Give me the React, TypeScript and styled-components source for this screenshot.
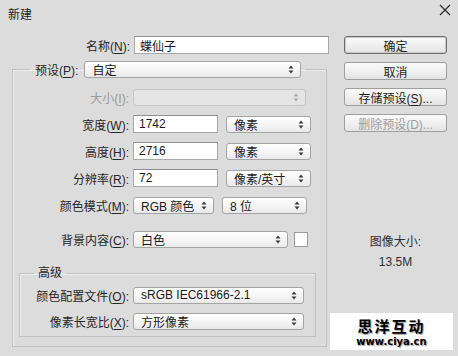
import React from 'react';
import styled, { createGlobalStyle, css } from 'styled-components';

const GlobalStyle = createGlobalStyle`
  html, body {
    margin: 0;
    padding: 0;
    background: #dcdcdc;
  }
  * {
    box-sizing: border-box;
  }
`;

const Window = styled.div`
  position: relative;
  width: 458px;
  height: 356px;
  overflow: hidden;
  background: #dcdcdc;
  color: #262626;
  font-family: 'Liberation Sans', 'Noto Sans CJK SC', sans-serif;
  font-size: 12px;
`;

const TitleBar = styled.div`
  height: 26px;
  display: flex;
  align-items: center;
  justify-content: space-between;
  padding: 0 6px 0 8px;
  font-size: 12px;
  color: #1e1e1e;
`;

const CloseButton = styled.button`
  width: 14px;
  height: 14px;
  margin-top: -6px;
  padding: 0;
  border: none;
  background: none;
  display: flex;
  align-items: center;
  justify-content: center;
`;

const Main = styled.div`
  display: flex;
  gap: 17px;
  padding: 10px 11px 0 12px;
`;

const LeftColumn = styled.div`
  width: 315px;
  display: flex;
  flex-direction: column;
`;

const Row = styled.div<{ $labelWidth: number; $top?: number }>`
  display: grid;
  grid-template-columns: ${(p) => p.$labelWidth}px auto;
  column-gap: 4px;
  align-items: center;
  height: 18px;
  margin-top: ${(p) => p.$top ?? 9}px;
`;

const Label = styled.label<{ $disabled?: boolean }>`
  text-align: right;
  white-space: nowrap;
  color: ${(p) => (p.$disabled ? '#9a9a9a' : '#262626')};

  u {
    text-underline-offset: 2px;
  }
`;

const TextInput = styled.div<{ $width: number }>`
  width: ${(p) => p.$width}px;
  height: 18px;
  display: flex;
  align-items: center;
  padding: 0 5px;
  background: #fff;
  border: 1px solid #a8a8a8;
  border-top-color: #8f8f8f;
  color: #1a1a1a;
`;

const SelectBox = styled.div<{ $width: number; $disabled?: boolean }>`
  width: ${(p) => p.$width}px;
  height: 17px;
  display: flex;
  align-items: center;
  justify-content: space-between;
  padding: 0 6px 0 7px;
  border: 1px solid #a4a4a4;
  border-radius: 3px;
  background: linear-gradient(#ffffff, #f4f4f4 55%, #e9e9e9);
  color: #1a1a1a;
  white-space: nowrap;

  ${(p) =>
    p.$disabled &&
    css`
      background: #e4e4e4;
      border-color: #c6c6c6;
    `}
`;

const Controls = styled.div`
  display: flex;
  align-items: center;
  gap: 8px;
`;

const Swatch = styled.div`
  width: 14px;
  height: 15px;
  margin-left: -2px;
  background: #fff;
  border: 1px solid #9c9c9c;
`;

const Group = styled.fieldset`
  margin: 7px 0 0 0;
  padding: 0 0 8px 0;
  height: 286px;
  border: 1px solid #c2c2c2;
  box-shadow: inset 1px 1px 0 #ececec;
`;

const PresetLegend = styled.legend`
  margin-left: 17px;
  padding: 0 4px 0 5px;
  display: flex;
  align-items: center;
  gap: 6px;
  height: 17px;
`;

const SubGroup = styled.fieldset`
  margin: 17px 0 0 6px;
  padding: 0 0 6px 0;
  width: 297px;
  border: 1px solid #c2c2c2;
  box-shadow: inset 1px 1px 0 #ececec;
`;

const SubLegend = styled.legend`
  margin-left: 14px;
  padding: 0 4px;
  line-height: 16px;
  color: #262626;
`;

const RightColumn = styled.div`
  width: 103px;
  display: flex;
  flex-direction: column;
  gap: 8px;
`;

const Button = styled.button<{ $primary?: boolean; $disabled?: boolean }>`
  height: 18px;
  padding: 0;
  font-family: inherit;
  font-size: 12px;
  color: ${(p) => (p.$disabled ? '#9c9c9c' : '#1e1e1e')};
  border: 1px solid ${(p) => (p.$primary ? '#6e6e6e' : '#9e9e9e')};
  border-radius: 3px;
  background: linear-gradient(#fbfbfb, #f0f0f0 50%, #e3e3e3);
  box-shadow: ${(p) => (p.$primary ? 'inset 0 0 0 1px #c9c9c9' : 'none')};
  cursor: default;

  u {
    text-underline-offset: 2px;
  }
`;

const ImageSize = styled.div`
  margin-top: 94px;
  display: flex;
  flex-direction: column;
  align-items: center;
  gap: 4px;
  line-height: 16px;
  color: #2e2e2e;
`;

const Watermark = styled.div`
  position: absolute;
  left: 330px;
  top: 313px;
  width: 123px;
  height: 37px;
  background: #fff;
  display: flex;
  flex-direction: column;
  align-items: center;
  justify-content: center;
  gap: 1px;
  color: #000;
  text-shadow: 1px 1px 1px #9a9a9a;
`;

const WatermarkTitle = styled.div`
  font-family: 'Noto Sans CJK SC', sans-serif;
  font-weight: 700;
  font-size: 15px;
  line-height: 19px;
  letter-spacing: 2px;
`;

const WatermarkUrl = styled.div`
  font-family: 'DejaVu Sans', sans-serif;
  font-weight: 700;
  font-size: 10px;
  line-height: 12px;
`;

function Arrows({ color = '#3a3a3a' }: { color?: string }) {
  return (
    <svg width="6" height="9" viewBox="0 0 6 9">
      <path d="M3 0.5 L5.5 3.5 H0.5 Z" fill={color} />
      <path d="M3 8.5 L5.5 5.5 H0.5 Z" fill={color} />
    </svg>
  );
}

function Select({ value, width, disabled }: { value: string; width: number; disabled?: boolean }) {
  return (
    <SelectBox $width={width} $disabled={disabled}>
      <span>{value}</span>
      <Arrows color={disabled ? '#a8a8a8' : '#3a3a3a'} />
    </SelectBox>
  );
}

function Mnemonic({ text, keyChar }: { text: string; keyChar: string }) {
  return (
    <>
      {text}(<u>{keyChar}</u>):
    </>
  );
}

export default function App() {
  return (
    <Window>
      <GlobalStyle />
      <TitleBar>
        <span>新建</span>
        <CloseButton aria-label="关闭">
          <svg width="12" height="12" viewBox="0 0 12 12">
            <path d="M1 1 L11 11 M11 1 L1 11" stroke="#2a2a2a" strokeWidth="1.2" />
          </svg>
        </CloseButton>
      </TitleBar>

      <Main>
        <LeftColumn>
          <Row $labelWidth={118} $top={0}>
            <Label>
              <Mnemonic text="名称" keyChar="N" />
            </Label>
            <TextInput $width={195}>蝶仙子</TextInput>
          </Row>

          <Group>
            <PresetLegend>
              <Label>
                <Mnemonic text="预设" keyChar="P" />
              </Label>
              <Select value="自定" width={217} />
            </PresetLegend>

            <Row $labelWidth={116} $top={10}>
              <Label $disabled>
                <Mnemonic text="大小" keyChar="I" />
              </Label>
              <Select value="" width={173} disabled />
            </Row>

            <Row $labelWidth={116}>
              <Label>
                <Mnemonic text="宽度" keyChar="W" />
              </Label>
              <Controls>
                <TextInput $width={85}>1742</TextInput>
                <Select value="像素" width={85} />
              </Controls>
            </Row>

            <Row $labelWidth={116}>
              <Label>
                <Mnemonic text="高度" keyChar="H" />
              </Label>
              <Controls>
                <TextInput $width={85}>2716</TextInput>
                <Select value="像素" width={85} />
              </Controls>
            </Row>

            <Row $labelWidth={116}>
              <Label>
                <Mnemonic text="分辨率" keyChar="R" />
              </Label>
              <Controls>
                <TextInput $width={85}>72</TextInput>
                <Select value="像素/英寸" width={85} />
              </Controls>
            </Row>

            <Row $labelWidth={116}>
              <Label>
                <Mnemonic text="颜色模式" keyChar="M" />
              </Label>
              <Controls>
                <Select value="RGB 颜色" width={81} />
                <Select value="8 位" width={85} />
              </Controls>
            </Row>

            <Row $labelWidth={116} $top={16}>
              <Label>
                <Mnemonic text="背景内容" keyChar="C" />
              </Label>
              <Controls>
                <Select value="白色" width={155} />
                <Swatch />
              </Controls>
            </Row>

            <SubGroup>
              <SubLegend>高级</SubLegend>
              <Row $labelWidth={109} $top={5}>
                <Label>
                  <Mnemonic text="颜色配置文件" keyChar="O" />
                </Label>
                <Select value="sRGB IEC61966-2.1" width={171} />
              </Row>
              <Row $labelWidth={109} $top={8}>
                <Label>
                  <Mnemonic text="像素长宽比" keyChar="X" />
                </Label>
                <Select value="方形像素" width={171} />
              </Row>
            </SubGroup>
          </Group>
        </LeftColumn>

        <RightColumn>
          <Button $primary>确定</Button>
          <Button>取消</Button>
          <Button>
            存储预设(<u>S</u>)...
          </Button>
          <Button $disabled disabled>
            删除预设(<u>D</u>)...
          </Button>
          <ImageSize>
            <span>图像大小:</span>
            <span>13.5M</span>
          </ImageSize>
        </RightColumn>
      </Main>

      <Watermark>
        <WatermarkTitle>思洋互动</WatermarkTitle>
        <WatermarkUrl>www.ciya.cn</WatermarkUrl>
      </Watermark>
    </Window>
  );
}
